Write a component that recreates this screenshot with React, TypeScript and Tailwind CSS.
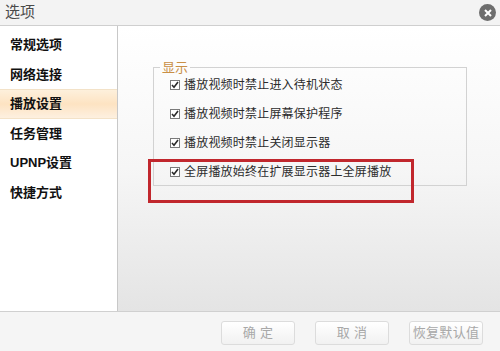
import React from 'react';

const font = { fontFamily: '"Liberation Sans", "Noto Sans CJK SC", sans-serif' };

const navItems = ['常规选项', '网络连接', '播放设置', '任务管理', 'UPNP设置', '快捷方式'];

const options = [
  '播放视频时禁止进入待机状态',
  '播放视频时禁止屏幕保护程序',
  '播放视频时禁止关闭显示器',
  '全屏播放始终在扩展显示器上全屏播放',
];

const CheckBox: React.FC = () => (
  <span className="w-[10px] h-[10px] border border-[#7a7a7a] bg-white flex items-center justify-center shrink-0">
    <svg width="8" height="8" viewBox="0 0 8 8">
      <path d="M1 4 L3 6.2 L7 1" fill="none" stroke="#2a2a2a" strokeWidth="1.6" />
    </svg>
  </span>
);

const Button: React.FC<{ label: string }> = ({ label }) => (
  <button className="w-[74px] h-[24px] rounded-[3px] border border-[#dcdcdc] bg-gradient-to-b from-white to-[#f1f1f1] text-[13px] text-[#a8a8a8] tracking-wide">
    {label}
  </button>
);

export default function App() {
  return (
    <div className="w-[500px] h-[351px] bg-[#f5f5f5] flex flex-col overflow-hidden" style={font}>
      {/* 标题栏 */}
      <div className="h-[26px] shrink-0 flex items-center justify-between pl-[5px] pr-[4px] bg-[#f3f3f3] border-b border-[#cfcfcf]">
        <span className="text-[15px] text-[#4a4a4a]">选项</span>
        <span className="w-[17px] h-[17px] rounded-full bg-[#6e6e6e] flex items-center justify-center">
          <svg width="8" height="8" viewBox="0 0 8 8">
            <path d="M1 1 L7 7 M7 1 L1 7" stroke="white" strokeWidth="2" />
          </svg>
        </span>
      </div>

      {/* 主体 */}
      <div className="h-[286px] shrink-0 flex border-b border-[#d0d0d0]">
        <div className="w-[118px] shrink-0 bg-white border-r border-[#c8c8c8] pt-[4px] flex flex-col">
          {navItems.map((item) => (
            <div
              key={item}
              className={
                item === '播放设置'
                  ? 'h-[29.5px] flex items-center pl-[10px] text-[13px] font-bold text-[#111] bg-gradient-to-b from-[#fdf0dc] via-[#fde3c2] to-[#fdf0e0] border-y border-[#f3e2c8]'
                  : 'h-[29.5px] flex items-center pl-[10px] text-[13px] font-bold text-[#111]'
              }
            >
              {item}
            </div>
          ))}
        </div>

        <div className="relative flex-1 bg-gradient-to-b from-white via-[#f6f6f6] to-[#e4e4e4] pt-[35px] pl-[35px]">
          <fieldset className="w-[314px] h-[125px] border border-[#d2d2d2]">
            <legend className="ml-[6px] px-[2px] text-[13px] leading-[13px] text-[#c98f45]">显示</legend>
            <div className="flex flex-col pl-[16px] -mt-[4px]">
              {options.map((opt) => (
                <div key={opt} className="h-[29px] flex items-center gap-[4px] text-[12px] tracking-[0.2px] text-[#2c2c2c]">
                  <CheckBox />
                  <span>{opt}</span>
                </div>
              ))}
            </div>
          </fieldset>

          {/* 红框标注 */}
          <div className="absolute left-[30px] top-[133px] w-[266px] h-[44px] border-[3px] border-[#c1272d]" />
        </div>
      </div>

      {/* 底部按钮 */}
      <div className="flex-1 flex items-center justify-end gap-[20px] pr-[17px] pt-[2px]">
        <Button label="确 定" />
        <Button label="取 消" />
        <Button label="恢复默认值" />
      </div>
    </div>
  );
}
